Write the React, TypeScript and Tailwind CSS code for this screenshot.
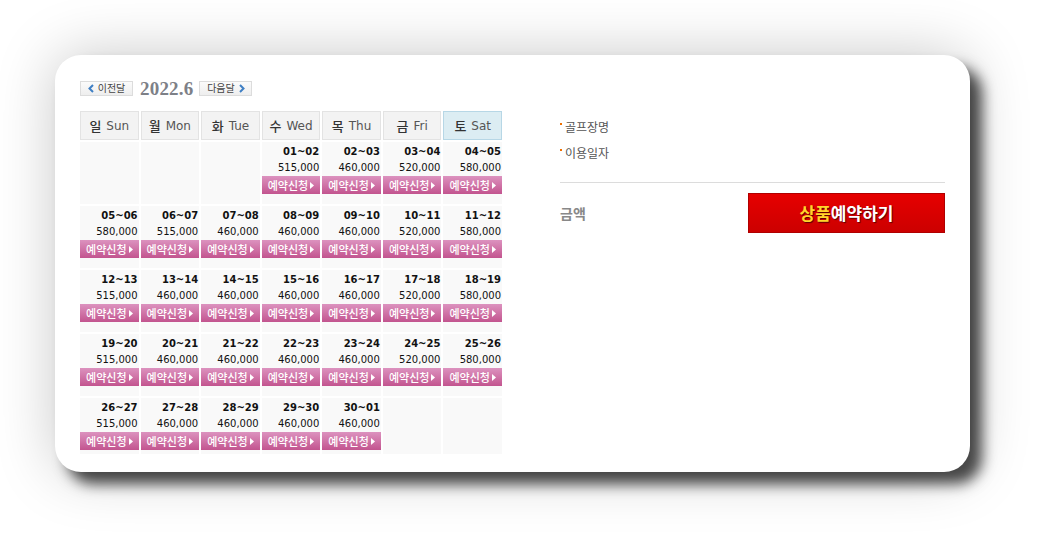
import * as React from 'react';

type Day = { date: string; price: string } | null;

const weekdays = [
  { ko: '일', en: 'Sun' },
  { ko: '월', en: 'Mon' },
  { ko: '화', en: 'Tue' },
  { ko: '수', en: 'Wed' },
  { ko: '목', en: 'Thu' },
  { ko: '금', en: 'Fri' },
  { ko: '토', en: 'Sat' },
];

const weeks: Day[][] = [
  [null, null, null,
    { date: '01~02', price: '515,000' },
    { date: '02~03', price: '460,000' },
    { date: '03~04', price: '520,000' },
    { date: '04~05', price: '580,000' }],
  [{ date: '05~06', price: '580,000' },
    { date: '06~07', price: '515,000' },
    { date: '07~08', price: '460,000' },
    { date: '08~09', price: '460,000' },
    { date: '09~10', price: '460,000' },
    { date: '10~11', price: '520,000' },
    { date: '11~12', price: '580,000' }],
  [{ date: '12~13', price: '515,000' },
    { date: '13~14', price: '460,000' },
    { date: '14~15', price: '460,000' },
    { date: '15~16', price: '460,000' },
    { date: '16~17', price: '460,000' },
    { date: '17~18', price: '520,000' },
    { date: '18~19', price: '580,000' }],
  [{ date: '19~20', price: '515,000' },
    { date: '20~21', price: '460,000' },
    { date: '21~22', price: '460,000' },
    { date: '22~23', price: '460,000' },
    { date: '23~24', price: '460,000' },
    { date: '24~25', price: '520,000' },
    { date: '25~26', price: '580,000' }],
  [{ date: '26~27', price: '515,000' },
    { date: '27~28', price: '460,000' },
    { date: '28~29', price: '460,000' },
    { date: '29~30', price: '460,000' },
    { date: '30~01', price: '460,000' },
    null, null],
];

const ko = "font-['DejaVu_Sans','Noto_Sans_CJK_KR',sans-serif]";

function NavButton({ label, dir }: { label: string; dir: 'prev' | 'next' }) {
  const chevron = (
    <svg width="6" height="9" viewBox="0 0 6 9" aria-hidden="true">
      <path
        d={dir === 'prev' ? 'M5 1 L1.5 4.5 L5 8' : 'M1 1 L4.5 4.5 L1 8'}
        fill="none"
        stroke="#3f7fc4"
        strokeWidth="2"
      />
    </svg>
  );
  return (
    <button
      className={`flex items-center justify-center gap-[4px] w-[53px] h-[15px] border border-[#dcdcdc] bg-gradient-to-b from-[#fbfbfb] to-[#eeeeee] text-[10px] leading-none text-[#444] ${ko}`}
    >
      {dir === 'prev' && chevron}
      <span>{label}</span>
      {dir === 'next' && chevron}
    </button>
  );
}

function DayCell({ day, last }: { day: Day; last: boolean }) {
  return (
    <div className={`bg-[#f9f9f9] ${last ? 'h-[56px]' : 'h-[62px]'} flex flex-col items-stretch`}>
      {day && (
        <>
          <div className="mt-[3px] pr-[1px] text-right text-[10px] leading-[14px] font-bold text-[#111] font-['DejaVu_Sans',sans-serif]">
            {day.date}
          </div>
          <div className="mt-[2px] pr-[1px] text-right text-[10px] leading-[14px] text-[#111] font-['DejaVu_Sans',sans-serif]">
            {day.price}
          </div>
          <button
            className="mt-[1px] h-[18px] flex items-center justify-center gap-[2px] bg-gradient-to-b from-[#dc92bf] to-[#c2548f] text-white text-[11px] leading-none font-medium font-['Noto_Sans_CJK_KR',sans-serif]"
          >
            <span>예약신청</span>
            <svg width="4" height="7" viewBox="0 0 4 7" aria-hidden="true">
              <path d="M0 0 L4 3.5 L0 7 Z" fill="#fff" />
            </svg>
          </button>
        </>
      )}
    </div>
  );
}

export default function App() {
  return (
    <div className="w-[1040px] h-[542px] bg-white pl-[55px] pt-[55px]">
      <div className="w-[915px] h-[417px] rounded-[26px] bg-white shadow-[12px_12px_14px_rgba(0,0,0,0.7),0_0_60px_rgba(0,0,0,0.22)] pl-[25px] pt-[26px] flex">
        {/* calendar */}
        <div className="w-[422px]">
          <div className="flex items-center h-[15px]">
            <NavButton label="이전달" dir="prev" />
            <span className="ml-[7px] mr-[6px] text-[19px] leading-none font-bold text-[#7d8087] font-['Liberation_Serif',serif] tracking-[0.2px]">
              2022.6
            </span>
            <NavButton label="다음달" dir="next" />
          </div>

          <div className="mt-[15px] grid grid-cols-7 gap-[2px]">
            {weekdays.map((w) => (
              <div
                key={w.en}
                className={`h-[29px] flex items-center justify-center gap-[5px] border text-[12px] text-[#555] ${ko} ${
                  w.en === 'Sat'
                    ? 'bg-[#dcedf3] border-[#b7d7e6]'
                    : 'bg-[#f3f3f3] border-[#e3e3e3]'
                }`}
              >
                <span className="text-[13px] font-medium text-[#333] font-['Noto_Sans_CJK_KR',sans-serif]">{w.ko}</span>
                <span>{w.en}</span>
              </div>
            ))}
            {weeks.map((week, wi) =>
              week.map((day, di) => (
                <DayCell key={`${wi}-${di}`} day={day} last={wi === weeks.length - 1} />
              ))
            )}
          </div>
        </div>

        {/* info panel */}
        <div className="ml-[58px] w-[385px] pt-[38px]">
          <ul className="text-[12px] leading-[16px] text-[#555] font-['Noto_Sans_CJK_KR',sans-serif]">
            <li className="flex items-start gap-[3px]">
              <span className="mt-[4px] w-[2px] h-[2px] bg-[#f07000]" />
              <span>골프장명</span>
            </li>
            <li className="mt-[10px] flex items-start gap-[3px]">
              <span className="mt-[4px] w-[2px] h-[2px] bg-[#f07000]" />
              <span>이용일자</span>
            </li>
          </ul>
          <div className="mt-[21px] border-t border-[#dcdcdc]" />
          <div className="mt-[10px] flex items-center justify-between">
            <span className="text-[14px] font-bold text-[#888] font-['Noto_Sans_CJK_KR',sans-serif]">금액</span>
            <button className="w-[197px] h-[40px] border border-[#b00000] bg-gradient-to-b from-[#e60000] to-[#cc0000] flex items-center justify-center text-[17px] font-bold font-['Noto_Sans_CJK_KR',sans-serif] [text-shadow:1px_1px_1px_#5a0000]">
              <span className="text-[#ffd52a]">상품</span>
              <span className="text-white">예약하기</span>
            </button>
          </div>
        </div>
      </div>
    </div>
  );
}
